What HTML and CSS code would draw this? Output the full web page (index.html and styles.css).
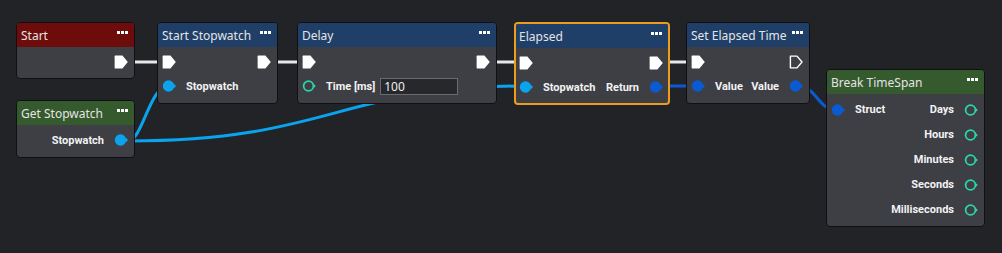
FILE: index.html
```html
<!DOCTYPE html>
<html>
<head>
<meta charset="utf-8">
<link rel="stylesheet" href="styles.css">
</head>
<body>
<div class="canvas">
  <svg class="wires" width="1002" height="253" viewBox="0 0 1002 253">
    <g fill="none" stroke-linecap="round">
      <path d="M127 62 H163" stroke="#e8e8e8" stroke-width="3"/>
      <path d="M269 62 H303" stroke="#e8e8e8" stroke-width="3"/>
      <path d="M488 62 H520" stroke="#e8e8e8" stroke-width="3"/>
      <path d="M661 62 H692" stroke="#e8e8e8" stroke-width="3"/>
      <path d="M128 141 C 142 141, 150 86, 168 86" stroke="#0aa3ee" stroke-width="3"/>
      <path d="M128 141 C 330 141, 340 86, 525 86" stroke="#0aa3ee" stroke-width="3"/>
      <path d="M655 86 H700" stroke="#0a5ad2" stroke-width="3"/>
      <path d="M797 86 C 818 86, 816 110, 838 110" stroke="#0a5ad2" stroke-width="3"/>
    </g>
  </svg>

  <div class="node n-start">
    <div class="hdr red"><span class="title">Start</span><svg class="menu" width="11" height="3" viewBox="0 0 11 3"><rect x="0" y="0" width="3" height="3" fill="#fff"/><rect x="4" y="0" width="3" height="3" fill="#fff"/><rect x="8" y="0" width="3" height="3" fill="#fff"/></svg></div>
    <div class="body">
      <div class="row end">
        <svg class="pin" width="14" height="14" viewBox="0 0 14 14"><path d="M1.2 0.6 H8.4 L13.8 7 L8.4 13.4 H1.2 Q0.6 13.4 0.6 12.8 V1.2 Q0.6 0.6 1.2 0.6 Z" fill="#fff"/></svg>
      </div>
    </div>
  </div>

  <div class="node n-get">
    <div class="hdr green"><span class="title">Get Stopwatch</span><svg class="menu" width="11" height="3" viewBox="0 0 11 3"><rect x="0" y="0" width="3" height="3" fill="#fff"/><rect x="4" y="0" width="3" height="3" fill="#fff"/><rect x="8" y="0" width="3" height="3" fill="#fff"/></svg></div>
    <div class="body">
      <div class="row end">
        <div class="grp"><span class="label">Stopwatch</span><svg class="pin" width="14" height="14" viewBox="0 0 14 14"><circle cx="6.5" cy="7" r="5.7" fill="#0aa3ee"/><path d="M12 4.8 L14 7 L12 9.2 Z" fill="#0aa3ee"/></svg></div>
      </div>
    </div>
  </div>

  <div class="node n-ssw">
    <div class="hdr blue"><span class="title">Start Stopwatch</span><svg class="menu" width="11" height="3" viewBox="0 0 11 3"><rect x="0" y="0" width="3" height="3" fill="#fff"/><rect x="4" y="0" width="3" height="3" fill="#fff"/><rect x="8" y="0" width="3" height="3" fill="#fff"/></svg></div>
    <div class="body">
      <div class="row">
        <svg class="pin" width="14" height="14" viewBox="0 0 14 14"><path d="M1.2 0.6 H8.4 L13.8 7 L8.4 13.4 H1.2 Q0.6 13.4 0.6 12.8 V1.2 Q0.6 0.6 1.2 0.6 Z" fill="#fff"/></svg>
        <svg class="pin" width="14" height="14" viewBox="0 0 14 14"><path d="M1.2 0.6 H8.4 L13.8 7 L8.4 13.4 H1.2 Q0.6 13.4 0.6 12.8 V1.2 Q0.6 0.6 1.2 0.6 Z" fill="#fff"/></svg>
      </div>
      <div class="row">
        <div class="grp"><svg class="pin" width="14" height="14" viewBox="0 0 14 14"><circle cx="6.5" cy="7" r="5.7" fill="#0aa3ee"/><path d="M12 4.8 L14 7 L12 9.2 Z" fill="#0aa3ee"/></svg><span class="label">Stopwatch</span></div>
      </div>
    </div>
  </div>

  <div class="node n-delay">
    <div class="hdr blue"><span class="title">Delay</span><svg class="menu" width="11" height="3" viewBox="0 0 11 3"><rect x="0" y="0" width="3" height="3" fill="#fff"/><rect x="4" y="0" width="3" height="3" fill="#fff"/><rect x="8" y="0" width="3" height="3" fill="#fff"/></svg></div>
    <div class="body">
      <div class="row">
        <svg class="pin" width="14" height="14" viewBox="0 0 14 14"><path d="M1.2 0.6 H8.4 L13.8 7 L8.4 13.4 H1.2 Q0.6 13.4 0.6 12.8 V1.2 Q0.6 0.6 1.2 0.6 Z" fill="#fff"/></svg>
        <svg class="pin" width="14" height="14" viewBox="0 0 14 14"><path d="M1.2 0.6 H8.4 L13.8 7 L8.4 13.4 H1.2 Q0.6 13.4 0.6 12.8 V1.2 Q0.6 0.6 1.2 0.6 Z" fill="#fff"/></svg>
      </div>
      <div class="row">
        <div class="grp"><svg class="pin" width="14" height="14" viewBox="0 0 14 14"><circle cx="6.5" cy="7" r="4.9" fill="none" stroke="#2dd4a5" stroke-width="1.8"/><path d="M12 5.2 L13.8 7 L12 8.8 Z" fill="#2dd4a5"/></svg><span class="label">Time [ms]</span><span class="input">100</span></div>
      </div>
    </div>
  </div>

  <div class="node n-elapsed">
    <div class="hdr blue"><span class="title">Elapsed</span><svg class="menu" width="11" height="3" viewBox="0 0 11 3"><rect x="0" y="0" width="3" height="3" fill="#fff"/><rect x="4" y="0" width="3" height="3" fill="#fff"/><rect x="8" y="0" width="3" height="3" fill="#fff"/></svg></div>
    <div class="body">
      <div class="row">
        <svg class="pin" width="14" height="14" viewBox="0 0 14 14"><path d="M1.2 0.6 H8.4 L13.8 7 L8.4 13.4 H1.2 Q0.6 13.4 0.6 12.8 V1.2 Q0.6 0.6 1.2 0.6 Z" fill="#fff"/></svg>
        <svg class="pin" width="14" height="14" viewBox="0 0 14 14"><path d="M1.2 0.6 H8.4 L13.8 7 L8.4 13.4 H1.2 Q0.6 13.4 0.6 12.8 V1.2 Q0.6 0.6 1.2 0.6 Z" fill="#fff"/></svg>
      </div>
      <div class="row">
        <div class="grp"><svg class="pin" width="14" height="14" viewBox="0 0 14 14"><circle cx="6.5" cy="7" r="5.7" fill="#0aa3ee"/><path d="M12 4.8 L14 7 L12 9.2 Z" fill="#0aa3ee"/></svg><span class="label">Stopwatch</span></div>
        <div class="grp"><span class="label">Return</span><svg class="pin" width="14" height="14" viewBox="0 0 14 14"><circle cx="6.5" cy="7" r="5.7" fill="#0a5ad2"/><path d="M12 4.8 L14 7 L12 9.2 Z" fill="#0a5ad2"/></svg></div>
      </div>
    </div>
  </div>

  <div class="node n-set">
    <div class="hdr blue"><span class="title">Set Elapsed Time</span><svg class="menu" width="11" height="3" viewBox="0 0 11 3"><rect x="0" y="0" width="3" height="3" fill="#fff"/><rect x="4" y="0" width="3" height="3" fill="#fff"/><rect x="8" y="0" width="3" height="3" fill="#fff"/></svg></div>
    <div class="body">
      <div class="row">
        <svg class="pin" width="14" height="14" viewBox="0 0 14 14"><path d="M1.2 0.6 H8.4 L13.8 7 L8.4 13.4 H1.2 Q0.6 13.4 0.6 12.8 V1.2 Q0.6 0.6 1.2 0.6 Z" fill="#fff"/></svg>
        <svg class="pin" width="14" height="14" viewBox="0 0 14 14"><path d="M1.4 1.1 H8 L13 7 L8 12.9 H1.4 Z" fill="none" stroke="#fff" stroke-width="1.4" stroke-linejoin="round"/></svg>
      </div>
      <div class="row">
        <div class="grp"><svg class="pin" width="14" height="14" viewBox="0 0 14 14"><circle cx="6.5" cy="7" r="5.7" fill="#0a5ad2"/><path d="M12 4.8 L14 7 L12 9.2 Z" fill="#0a5ad2"/></svg><span class="label">Value</span></div>
        <div class="grp"><span class="label">Value</span><svg class="pin" width="14" height="14" viewBox="0 0 14 14"><circle cx="6.5" cy="7" r="5.7" fill="#0a5ad2"/><path d="M12 4.8 L14 7 L12 9.2 Z" fill="#0a5ad2"/></svg></div>
      </div>
    </div>
  </div>

  <div class="node n-break">
    <div class="hdr green"><span class="title">Break TimeSpan</span><svg class="menu" width="11" height="3" viewBox="0 0 11 3"><rect x="0" y="0" width="3" height="3" fill="#fff"/><rect x="4" y="0" width="3" height="3" fill="#fff"/><rect x="8" y="0" width="3" height="3" fill="#fff"/></svg></div>
    <div class="body">
      <div class="row tall">
        <div class="grp"><svg class="pin" width="14" height="14" viewBox="0 0 14 14"><circle cx="6.5" cy="7" r="5.7" fill="#0a5ad2"/><path d="M12 4.8 L14 7 L12 9.2 Z" fill="#0a5ad2"/></svg><span class="label">Struct</span></div>
        <div class="grp"><span class="label">Days</span><svg class="pin" width="14" height="14" viewBox="0 0 14 14"><circle cx="6.5" cy="7" r="4.9" fill="none" stroke="#2dd4a5" stroke-width="1.8"/><path d="M12 5.2 L13.8 7 L12 8.8 Z" fill="#2dd4a5"/></svg></div>
      </div>
      <div class="row tall end">
        <div class="grp"><span class="label">Hours</span><svg class="pin" width="14" height="14" viewBox="0 0 14 14"><circle cx="6.5" cy="7" r="4.9" fill="none" stroke="#2dd4a5" stroke-width="1.8"/><path d="M12 5.2 L13.8 7 L12 8.8 Z" fill="#2dd4a5"/></svg></div>
      </div>
      <div class="row tall end">
        <div class="grp"><span class="label">Minutes</span><svg class="pin" width="14" height="14" viewBox="0 0 14 14"><circle cx="6.5" cy="7" r="4.9" fill="none" stroke="#2dd4a5" stroke-width="1.8"/><path d="M12 5.2 L13.8 7 L12 8.8 Z" fill="#2dd4a5"/></svg></div>
      </div>
      <div class="row tall end">
        <div class="grp"><span class="label">Seconds</span><svg class="pin" width="14" height="14" viewBox="0 0 14 14"><circle cx="6.5" cy="7" r="4.9" fill="none" stroke="#2dd4a5" stroke-width="1.8"/><path d="M12 5.2 L13.8 7 L12 8.8 Z" fill="#2dd4a5"/></svg></div>
      </div>
      <div class="row tall end">
        <div class="grp"><span class="label">Milliseconds</span><svg class="pin" width="14" height="14" viewBox="0 0 14 14"><circle cx="6.5" cy="7" r="4.9" fill="none" stroke="#2dd4a5" stroke-width="1.8"/><path d="M12 5.2 L13.8 7 L12 8.8 Z" fill="#2dd4a5"/></svg></div>
      </div>
    </div>
  </div>
</div>
</body>
</html>
```
FILE: styles.css
```css
html, body {
  margin: 0;
  padding: 0;
  background: #222327;
}
.canvas {
  position: relative;
  width: 1002px;
  height: 253px;
  overflow: hidden;
  background: #222327;
}
.wires {
  position: absolute;
  left: 0;
  top: 0;
}
.node {
  position: absolute;
  box-sizing: border-box;
  display: flex;
  flex-direction: column;
  background: #3d3f45;
  border: 1px solid #101012;
  border-radius: 4px;
  overflow: hidden;
}
.hdr {
  height: 24px;
  flex: none;
  display: flex;
  justify-content: space-between;
  align-items: center;
  padding: 0 6px 0 4px;
  font-family: "Noto Sans", sans-serif;
  font-size: 12px;
  color: #e4e4e4;
}
.hdr .menu {
  align-self: flex-start;
  margin-top: 8px;
}
.red { background: #6e0c0c; }
.blue { background: #1f3f68; }
.green { background: #355a2d; }
.body {
  flex: 1;
  padding: 3px 6px 5px 4px;
}
.row {
  height: 24px;
  display: flex;
  align-items: center;
  justify-content: space-between;
}
.row.tall { height: 25px; }
.row.end { justify-content: flex-end; }
.grp {
  display: flex;
  align-items: center;
  gap: 10px;
}
.pin { display: block; flex: none; }
.label {
  font-family: Roboto, sans-serif;
  font-weight: bold;
  font-size: 11px;
  color: #f2f2f2;
}
.input {
  box-sizing: border-box;
  width: 78px;
  height: 17px;
  margin-left: -5px;
  padding: 0 3px;
  background: #27282c;
  border: 1px solid #6a6b70;
  font-family: "Noto Sans", sans-serif;
  font-size: 12px;
  line-height: 15px;
  color: #f0f0f0;
}
.n-start { left: 16px; top: 22px; width: 119px; height: 57px; }
.n-get { left: 16px; top: 100px; width: 119px; height: 58px; }
.n-ssw { left: 157px; top: 22px; width: 121px; height: 82px; }
.n-delay { left: 297px; top: 22px; width: 200px; height: 82px; }
.n-elapsed { left: 514px; top: 22px; width: 156px; height: 83px; border: 2px solid #eb9d1e; }
.n-elapsed .hdr { padding-left: 3px; }
.n-elapsed .body { padding-left: 3px; padding-right: 5px; }
.n-set { left: 686px; top: 22px; width: 124px; height: 82px; }
.n-break { left: 826px; top: 69px; width: 159px; height: 158px; }
```
